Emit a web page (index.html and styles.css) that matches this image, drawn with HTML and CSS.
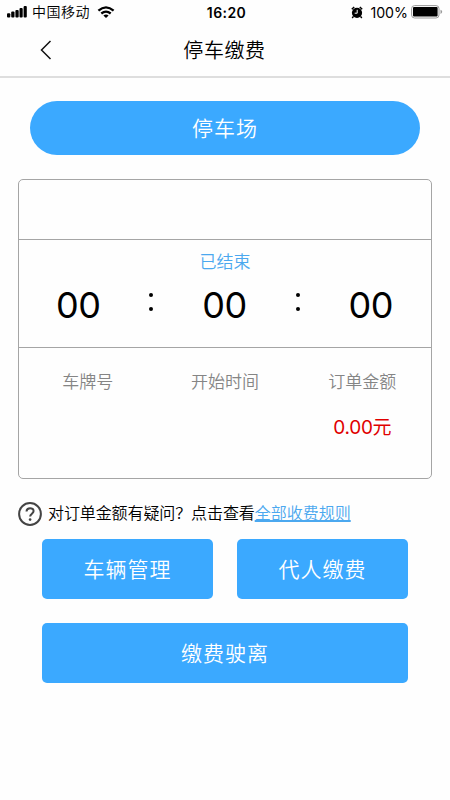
FILE: index.html
```html
<!DOCTYPE html>
<html lang="zh-CN">
<head>
<meta charset="utf-8">
<title>停车缴费</title>
<link rel="stylesheet" href="styles.css">
</head>
<body>
<div class="status">
  <div class="status-left">
    <svg class="signal" width="20" height="12" viewBox="0 0 20 12"><rect x="0" y="7.2" width="3.3" height="4.3" rx="1"/><rect x="4.2" y="5.6" width="3.3" height="5.9" rx="1"/><rect x="8.4" y="4.1" width="3.3" height="7.4" rx="1"/><rect x="12.5" y="2.1" width="3.2" height="9.4" rx="1"/><rect x="16.6" y="0" width="3.2" height="11.5" rx="1"/></svg>
    <span class="carrier">中国移动</span>
    <svg class="wifi" width="18" height="13" viewBox="0 0 18 13"><path d="M1.4 4.6Q9 -1.9 16.6 4.6M4.3 7.5Q9 3.7 13.7 7.5" fill="none" stroke="#000" stroke-width="2.3"/><path d="M6.4 9.4Q9 7.4 11.6 9.4L9 12.1Z"/></svg>
  </div>
  <div class="time">16:20</div>
  <div class="status-right">
    <svg class="alarm" width="12" height="13" viewBox="0 0 12 13"><circle cx="6" cy="6.8" r="5.1"/><path d="M.8 3.2L3.2 1M11.2 3.2L8.8 1M2.5 10.4L1.2 12M9.5 10.4L10.8 12" stroke="#000" stroke-width="1.5"/><path d="M6.2 3.8V7.2H3.7" fill="none" stroke="#fff" stroke-width="1"/></svg>
    <span class="percent">100%</span>
    <svg class="battery" width="32" height="14" viewBox="0 0 32 14"><rect x=".6" y=".6" width="27.4" height="12.4" rx="3" fill="none" stroke="#999" stroke-width="1"/><rect x="2" y="2" width="24.6" height="9.6" rx="1"/><path d="M29.5 4.7Q31.2 5.2 31.2 6.8T29.5 8.9Z" fill="#999"/></svg>
  </div>
</div>
<header class="nav">
  <svg class="back" width="12" height="20" viewBox="0 0 12 20"><path d="M10.5 1L1.5 10L10.5 19" fill="none" stroke="#111" stroke-width="1.5"/></svg>
  <h1>停车缴费</h1>
</header>
<main>
  <button class="lot">停车场</button>
  <section class="card">
    <div class="card-top"></div>
    <div class="timer">
      <div class="state">已结束</div>
      <div class="clock"><span>00</span><i class="colon"></i><span>00</span><i class="colon"></i><span>00</span></div>
    </div>
    <div class="order">
      <div>车牌号</div>
      <div>开始时间</div>
      <div>订单金额<p class="amount">0.00元</p></div>
    </div>
  </section>
  <div class="hint">
    <svg class="help" width="24" height="26" viewBox="0 0 24 26"><circle cx="12" cy="13" r="10.9" fill="none" stroke="#444" stroke-width="2"/><path d="M8.5 10.6C8.5 6 15.6 6.2 15.6 10.1C15.6 12.6 12.1 12.8 12.1 15.6" fill="none" stroke="#444" stroke-width="2"/><circle cx="12.1" cy="18.6" r="1.3" fill="#444"/></svg>
    <span>对订单金额有疑问？点击查看</span><a>全部收费规则</a>
  </div>
  <div class="actions">
    <button>车辆管理</button>
    <button>代人缴费</button>
    <button class="wide">缴费驶离</button>
  </div>
</main>
</body>
</html>
```
FILE: styles.css
```css
* { box-sizing: border-box; }
body {
  margin: 0;
  width: 450px;
  height: 800px;
  overflow: hidden;
  background: #fefefe;
  color: #000;
  font-family: Inter, "Noto Sans CJK SC", sans-serif;
}
svg { display: block; flex: none; }
button {
  border: 0;
  padding: 1px 0 0;
  background: #3ba9ff;
  color: #fff;
  font: 350 21px/30px Inter, "Noto Sans CJK SC", sans-serif;
  letter-spacing: 1px;
}
.status {
  display: grid;
  grid-template-columns: 1fr 60px 1fr;
  height: 24px;
  padding: 0 7px;
  align-items: center;
  font-size: 14px;
  line-height: 20px;
}
.status-left, .status-right { display: flex; align-items: center; }
.status-right { justify-content: flex-end; }
.carrier { margin-left: 5px; letter-spacing: 0.5px; font-weight: 350; }
.wifi { margin-left: 7px; }
.time { padding-left: 3px; padding-top: 1px; text-align: center; font-weight: 600; letter-spacing: 0.4px; }
.percent { margin: 1px 3px 0 7px; font-size: 14.2px; }
.nav {
  display: flex;
  align-items: center;
  height: 54px;
  padding-left: 40px;
  border-bottom: 2px solid #dedede;
}
h1 {
  flex: 1;
  margin: 0 53px 0 0;
  padding-top: 2px;
  text-align: center;
  font-size: 20px;
  font-weight: 350;
  line-height: 30px;
  letter-spacing: 0.6px;
}
main { padding: 23px 18px 0; }
.lot { display: block; width: 390px; height: 54px; margin: 0 auto 24px; border-radius: 27px; }
.card { height: 300px; border: 1px solid #a5a5a5; border-radius: 5px; }
.card-top { height: 60px; border-bottom: 1px solid #a5a5a5; }
.timer { height: 108px; border-bottom: 1px solid #a5a5a5; padding-top: 10px; }
.state { text-align: center; color: #4ba8ef; font-size: 17px; line-height: 24px; font-weight: 350; }
.clock { display: flex; justify-content: space-between; align-items: center; padding: 9px 38px 0 37px; font-size: 36px; letter-spacing: -0.5px; line-height: 44px; }
.colon { display: flex; flex-direction: column; justify-content: space-between; width: 4px; height: 18px; margin-top: -6px; }
.colon::before, .colon::after { content: ""; width: 4px; height: 4px; border-radius: 50%; background: #000; }
.order {
  display: grid;
  grid-template-columns: repeat(3, 1fr);
  padding-top: 22px;
  text-align: center;
  color: #858585;
  font-size: 17px;
  line-height: 24px;
  font-weight: 350;
}
.amount { margin: 21px 0 0; color: #e00000; font-size: 19px; font-weight: 400; line-height: 26px; letter-spacing: -0.3px; }
.hint { display: flex; align-items: center; height: 60px; padding-top: 10px; font-size: 16px; line-height: 24px; font-weight: 350; }
.help { margin-right: 6px; }
.hint span, .hint a { margin-top: -3px; letter-spacing: -0.1px; }
.hint a { color: #4ba8ef; letter-spacing: 0; text-decoration: underline; text-decoration-thickness: 2px; text-underline-offset: 1px; }
.actions { display: grid; grid-template-columns: 171px 171px; gap: 24px; padding: 0 24px; }
.actions button { height: 60px; border-radius: 5px; }
.actions .wide { grid-column: 1 / -1; }
```
